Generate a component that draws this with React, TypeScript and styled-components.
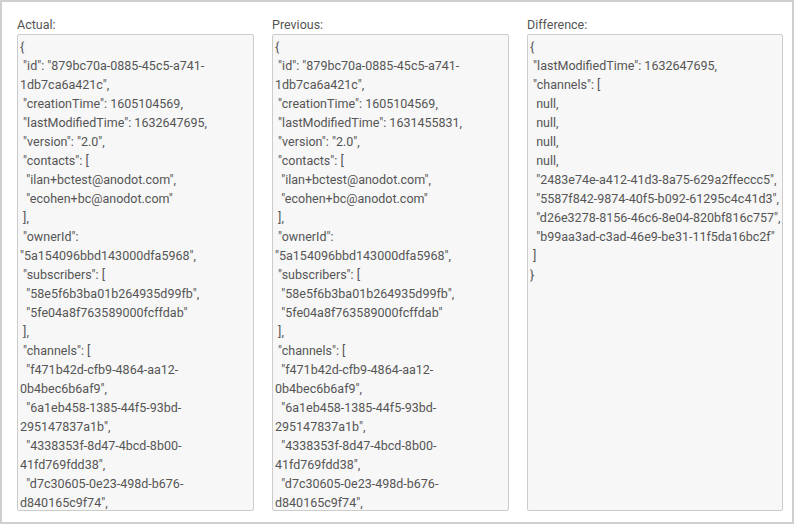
import React from 'react'
import styled, { createGlobalStyle } from 'styled-components'

const GlobalStyle = createGlobalStyle`
  html, body { margin: 0; padding: 0; background: #fff; }
  body { font-family: Roboto, "Liberation Sans", sans-serif; }
`

const Frame = styled.div`
  box-sizing: border-box;
  width: 794px;
  height: 524px;
  border: 2px solid #cfcfcf;
  padding: 13px 9px 0 15px;
  display: grid;
  grid-template-columns: 237px 237px 256px;
  column-gap: 18px;
`

const Column = styled.div`
  display: flex;
  flex-direction: column;
`

const Label = styled.div`
  font-size: 12.5px;
  color: #555;
  height: 19px;
  line-height: 19px;
`

const CodeBox = styled.div`
  box-sizing: border-box;
  height: 477px;
  background: #f7f7f7;
  border: 1px solid #cccccc;
  border-radius: 2px;
  padding: 2px 0 0 2px;
  overflow: hidden;
  white-space: pre-wrap;
  font-size: 12.5px;
  line-height: 19px;
  color: #555;
`

const actual = `{
 "id": "879bc70a-0885-45c5-a741-1db7ca6a421c",
 "creationTime": 1605104569,
 "lastModifiedTime": 1632647695,
 "version": "2.0",
 "contacts": [
  "ilan+bctest@anodot.com",
  "ecohen+bc@anodot.com"
 ],
 "ownerId": "5a154096bbd143000dfa5968",
 "subscribers": [
  "58e5f6b3ba01b264935d99fb",
  "5fe04a8f763589000fcffdab"
 ],
 "channels": [
  "f471b42d-cfb9-4864-aa12-0b4bec6b6af9",
  "6a1eb458-1385-44f5-93bd-295147837a1b",
  "4338353f-8d47-4bcd-8b00-41fd769fdd38",
  "d7c30605-0e23-498d-b676-d840165c9f74",
  "2483e74e-a412-41d3-8a75-629a2ffeccc5"
 ]
}`

const previous = actual.replace('"lastModifiedTime": 1632647695', '"lastModifiedTime": 1631455831')

const difference = `{
 "lastModifiedTime": 1632647695,
 "channels": [
  null,
  null,
  null,
  null,
  "2483e74e-a412-41d3-8a75-629a2ffeccc5",
  "5587f842-9874-40f5-b092-61295c4c41d3",
  "d26e3278-8156-46c6-8e04-820bf816c757",
  "b99aa3ad-c3ad-46e9-be31-11f5da16bc2f"
 ]
}`

const panels = [
  { title: 'Actual:', text: actual },
  { title: 'Previous:', text: previous },
  { title: 'Difference:', text: difference },
]

export default function App() {
  return (
    <>
      <GlobalStyle />
      <Frame>
        {panels.map((p) => (
          <Column key={p.title}>
            <Label>{p.title}</Label>
            <CodeBox>{p.text}</CodeBox>
          </Column>
        ))}
      </Frame>
    </>
  )
}
